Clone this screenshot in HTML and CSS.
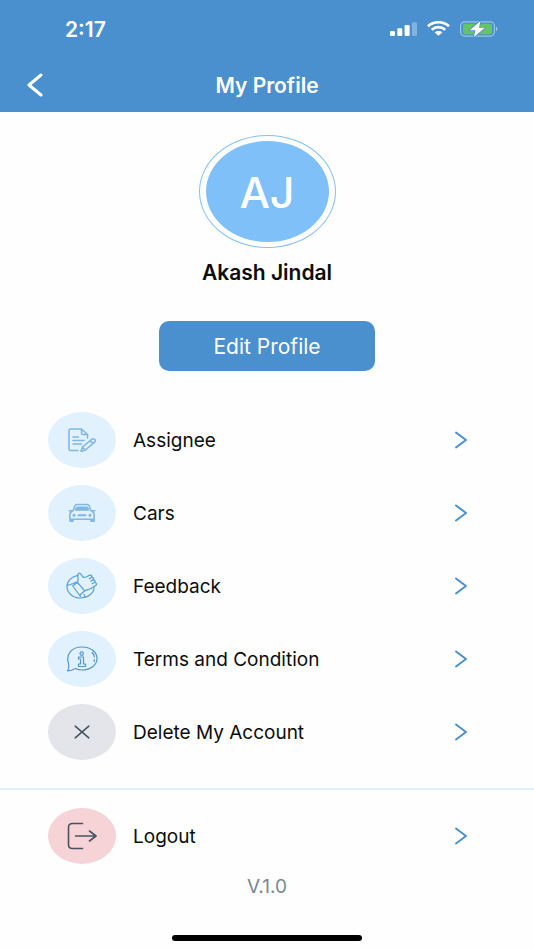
FILE: index.html
```html
<!DOCTYPE html>
<html lang="en">
<head>
<meta charset="utf-8">
<meta name="viewport" content="width=device-width, initial-scale=1">
<title>My Profile</title>
<link rel="stylesheet" href="styles.css">
</head>
<body>
<header class="top">
  <div class="status">
    <time class="clock">2:17</time>
    <div class="indicators">
      <svg width="27" height="16" viewBox="0 0 27 16" aria-hidden="true">
        <g fill="#fff"><rect x="0" y="10" width="5" height="5" rx="1.2"/><rect x="7.3" y="7.3" width="5" height="7.7" rx="1.2"/><rect x="14.6" y="4" width="5" height="11" rx="1.2"/></g>
        <rect x="22" y="1.3" width="5" height="13.7" rx="1.2" fill="#80b3df"/>
      </svg>
      <svg width="23" height="16" viewBox="0 0 23 16" aria-hidden="true">
        <g fill="none" stroke="#fff" stroke-width="2.600"><path d="M1 5.200C7-.1 16-.1 22 5.200"/><path d="M4.700 8.700c4-3.400 9.600-3.400 13.600 0"/></g>
        <path d="M7.600 11.400c2.300-1.900 5.500-1.900 7.800 0L11.500 14.800z" fill="#fff"/>
      </svg>
      <svg width="38" height="16" viewBox="0 0 38 16" aria-hidden="true">
        <rect x=".6" y=".9" width="33.800" height="14.200" rx="4" fill="none" stroke="#9bc3e6" stroke-width="1.200"/>
        <rect x="3" y="2.800" width="29" height="10.400" rx="2.200" fill="#65c466"/>
        <path d="M36 5.800c2 .6 2 3.800 0 4.400z" fill="#9bc3e6"/>
        <path d="M20.500 0 9.800 9.200h5.700L13.800 16 25 6.800h-6z" fill="#fff" stroke="#4a90cf" stroke-width="1.600" stroke-linejoin="round" paint-order="stroke"/>
      </svg>
    </div>
  </div>
  <div class="nav">
    <button class="back" type="button" aria-label="Back">
      <svg width="17" height="24" viewBox="0 0 17 24" aria-hidden="true"><path d="M14 2 2 12 14 22" fill="none" stroke="#fff" stroke-width="3" stroke-linecap="round" stroke-linejoin="round"/></svg>
    </button>
    <h1 class="title">My Profile</h1>
  </div>
</header>

<main class="content">
  <section class="profile">
    <div class="ring"><div class="avatar">AJ</div></div>
    <h2 class="name">Akash Jindal</h2>
    <button class="edit" type="button">Edit Profile</button>
  </section>

  <nav class="menu" aria-label="Account">
    <a class="row" href="#assignee">
      <span class="badge">
        <svg width="30" height="26" viewBox="0 0 30 26" fill="none" stroke="#80b7e5" stroke-width="1.600" stroke-linecap="round" stroke-linejoin="round" aria-hidden="true">
          <path d="M11 23.500H3.500Q2 23.500 2 22V3.500Q2 2 3.500 2H14.500L20.500 7.500V11M14.500 2V6Q14.500 7.500 16 7.500H20.500M6 10H11.500M6 13.500H17M6 17H14.500"/>
          <path d="m15.500 20 9.500-7.800c1.500-1.200 4.300 1 2.900 2.700L18.500 23l-4.500 1.200zM15.500 20l3 3M23 13.800l3 2.600"/>
        </svg>
      </span>
      <span class="label">Assignee</span>
      <svg class="chevron" width="14" height="18" viewBox="0 0 14 18" aria-hidden="true"><path d="M2 1.500 12 9 2 16.500"/></svg>
    </a>
    <a class="row" href="#cars">
      <span class="badge">
        <svg width="28" height="20" viewBox="0 0 28 20" fill="none" stroke="#80b7e5" stroke-width="1.500" stroke-linejoin="round" aria-hidden="true">
          <path d="M5 7.800 6.800 2.800Q7.500 1.500 9 1.500H19Q20.500 1.500 21.200 2.800L23 7.800Q26.200 9 26.200 12V16.200H1.800V12Q1.800 9 5 7.800z"/>
          <path d="M1.200 7.800H3.500M24.500 7.800H26.800" stroke-linecap="round"/>
          <path d="M7 7.200 8.500 4H19.500L21 7.200z" fill="#80b7e5" stroke-width="1"/>
          <path d="M2 16.500v1.800h3v-1.800M23 16.500v1.800h3v-1.800" fill="#80b7e5"/>
          <path d="M10.500 12.300h7" stroke-width="2" stroke-linecap="round"/>
          <circle cx="6" cy="12.300" r=".8" fill="#80b7e5"/><circle cx="22" cy="12.300" r=".8" fill="#80b7e5"/>
        </svg>
      </span>
      <span class="label">Cars</span>
      <svg class="chevron" width="14" height="18" viewBox="0 0 14 18" aria-hidden="true"><path d="M2 1.500 12 9 2 16.500"/></svg>
    </a>
    <a class="row" href="#feedback">
      <span class="badge">
        <svg width="32" height="28" viewBox="0 0 32 28" fill="none" stroke="#58a0de" stroke-width="1.200" stroke-linecap="round" stroke-linejoin="round" aria-hidden="true">
          <path d="M12 3.400C5.500 4.500 1 9 1 14.500 1 21 7 26 14.500 26S28 21 28 15.500"/>
          <path d="M1.300 13.500 8 11.200M18.200 22.500l.8 2.700M6.500 14 11.500 10.500 18.700 18.800 14.200 22.800M8 11.200l2-1.200 1.500.5M7.500 15 14.500 24.500"/>
          <path d="M11.500 10.500C13 8 11 4 12.200 1.800c1.300-1.600 3 .2 3.500 1.500l1.800 2.200c2.500.2 4.500-1.800 6.500-2.300 2-.2 2.500 1.300 1.300 2.300l-1.800 1.300M25.300 5.500c2.200-.3 3 1.300 1.700 2.300l-2 1.500M27 7.800c2.200.2 2.700 1.700 1.300 2.700l-2.300 1.200M28.300 10.500c2.700.2 3 2.200 1 3.200l-4.300 2.800c-2 1.200-4.300 1-6.300 2.300"/>
        </svg>
      </span>
      <span class="label">Feedback</span>
      <svg class="chevron" width="14" height="18" viewBox="0 0 14 18" aria-hidden="true"><path d="M2 1.500 12 9 2 16.500"/></svg>
    </a>
    <a class="row" href="#terms">
      <span class="badge">
        <svg width="32" height="28" viewBox="0 0 32 28" fill="none" stroke="#4f98d8" stroke-width="1.200" stroke-linecap="round" stroke-linejoin="round" aria-hidden="true">
          <path d="M1.500 25.800C3 23.500 3 21 2.500 18.500-.5 9 6 2 16 2c8.500 0 15 5 15 11.600S24.500 25 16 25c-2.500 0-4.500-.5-6.500-1.500-2.500 1.500-5 2.300-8 2.300z"/>
          <path d="M26.200 7.500c1.200 1.200 2 2.800 2.200 4.500M28.400 14.500l-.2 1.800"/>
          <circle cx="15.700" cy="8.600" r="1.700"/>
          <path d="M12.500 12H17.500V19H19.500V21.500H12.500V19H14.500V14H12.500z"/>
        </svg>
      </span>
      <span class="label">Terms and Condition</span>
      <svg class="chevron" width="14" height="18" viewBox="0 0 14 18" aria-hidden="true"><path d="M2 1.500 12 9 2 16.500"/></svg>
    </a>
    <a class="row" href="#delete">
      <span class="badge badge-gray">
        <svg width="16" height="14" viewBox="0 0 16 14" fill="none" stroke="#45555f" stroke-width="1.600" stroke-linecap="round" aria-hidden="true"><path d="M1.200 1.200 14.800 12.800M14.800 1.200 1.200 12.800"/></svg>
      </span>
      <span class="label">Delete My Account</span>
      <svg class="chevron" width="14" height="18" viewBox="0 0 14 18" aria-hidden="true"><path d="M2 1.500 12 9 2 16.500"/></svg>
    </a>
  </nav>

  <hr class="divider">

  <div class="menu">
    <a class="row" href="#logout">
      <span class="badge badge-red">
        <svg width="30" height="28" viewBox="0 0 30 28" fill="none" stroke="#45555f" stroke-width="1.600" stroke-linecap="round" stroke-linejoin="round" aria-hidden="true"><path d="M15.500 1.500H5.500Q1.500 1.500 1.500 5.500V22.500Q1.500 26.500 5.500 26.500H15.500M8.500 14H29M22.500 9 29 14 22.500 19"/></svg>
      </span>
      <span class="label">Logout</span>
      <svg class="chevron" width="14" height="18" viewBox="0 0 14 18" aria-hidden="true"><path d="M2 1.500 12 9 2 16.500"/></svg>
    </a>
  </div>
  <p class="version">V.1.0</p>
</main>
<footer class="home"><div class="home-bar"></div></footer>
</body>
</html>
```
FILE: styles.css
```css
* {
  box-sizing: border-box;
}

body {
  margin: 0;
  min-height: 100vh;
  display: flex;
  flex-direction: column;
  background: #fefefe;
  color: #0c0c0c;
  font-family: Inter, "Liberation Sans", sans-serif;
}

button {
  border: 0;
  padding: 0;
  font: inherit;
  cursor: pointer;
}

svg {
  display: block;
  flex: none;
}

.top {
  background: #4a90cf;
  color: #fff;
}

.status {
  display: flex;
  align-items: center;
  justify-content: space-between;
  height: 58px;
  padding: 0 36px 0 65px;
}

.clock {
  font-size: 21px;
  font-weight: 600;
}

.indicators {
  display: flex;
  align-items: center;
  gap: 10px;
}

.nav {
  display: grid;
  grid-template-columns: 48px 1fr 48px;
  align-items: center;
  height: 54px;
}

.back {
  display: flex;
  justify-content: flex-end;
  padding: 4px;
  background: none;
}

.title {
  margin: 0;
  text-align: center;
  font-size: 21px;
  font-weight: 600;
}

.content {
  flex: 1;
}

.profile {
  display: flex;
  flex-direction: column;
  align-items: center;
  padding-top: 23px;
}

.ring {
  width: 137px;
  height: 113px;
  padding: 5px 6px;
  border: 1px solid #80c0f9;
  border-radius: 50%;
}

.avatar {
  display: flex;
  align-items: center;
  justify-content: center;
  height: 100%;
  border-radius: 50%;
  background: #80c0f9;
  color: #fff;
  font-size: 43px;
  font-weight: 500;
}

.name {
  margin: 12px 0 35px;
  font-size: 21px;
  font-weight: 600;
  line-height: 26px;
}

.edit {
  width: 216px;
  height: 50px;
  border-radius: 10px;
  background: #4a90cf;
  color: #fff;
  font-size: 21px;
}

.menu {
  display: flex;
  flex-direction: column;
  gap: 17px;
  padding: 0 66px 0 48px;
}

.profile + .menu {
  margin-top: 41px;
}

.row {
  display: flex;
  align-items: center;
  gap: 17px;
  color: inherit;
  text-decoration: none;
}

.badge {
  display: flex;
  align-items: center;
  justify-content: center;
  flex: none;
  width: 68px;
  height: 56px;
  border-radius: 50%;
  background: #e1f1fd;
}

.badge-gray {
  background: #e4e5eb;
}

.badge-red {
  background: #f6d3d6;
}

.label {
  flex: 1;
  padding-top: 2px;
  font-size: 19px;
  line-height: 24px;
}

.chevron {
  fill: none;
  stroke: #4a90cf;
  stroke-width: 2;
  stroke-linecap: round;
  stroke-linejoin: round;
}

.divider {
  height: 2px;
  margin: 28px 0 18px;
  border: 0;
  background: #e0f0fd;
}

.version {
  margin: 11px 0;
  text-align: center;
  color: #7b8790;
  font-size: 19px;
  line-height: 24px;
}

.home {
  display: flex;
  justify-content: center;
  padding-bottom: 9px;
}

.home-bar {
  width: 190px;
  height: 6px;
  border-radius: 3px;
  background: #000;
}
```
